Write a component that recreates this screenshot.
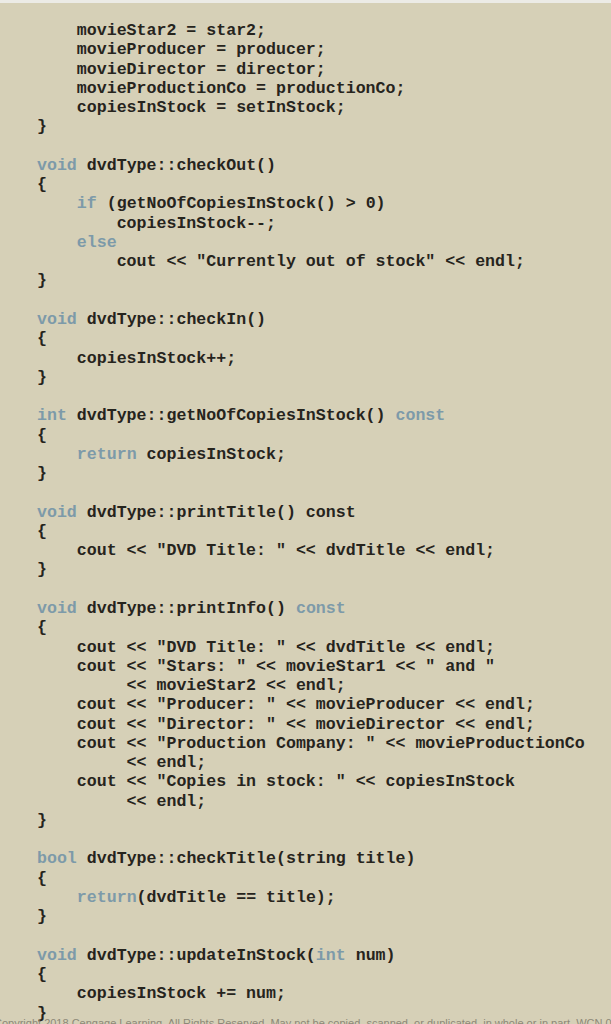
import React from 'react'

// keywords are wrapped in {{ }}
const CODE = `    movieStar2 = star2;
    movieProducer = producer;
    movieDirector = director;
    movieProductionCo = productionCo;
    copiesInStock = setInStock;
}

{{void}} dvdType::checkOut()
{
    {{if}} (getNoOfCopiesInStock() > 0)
        copiesInStock--;
    {{else}}
        cout << "Currently out of stock" << endl;
}

{{void}} dvdType::checkIn()
{
    copiesInStock++;
}

{{int}} dvdType::getNoOfCopiesInStock() {{const}}
{
    {{return}} copiesInStock;
}

{{void}} dvdType::printTitle() const
{
    cout << "DVD Title: " << dvdTitle << endl;
}

{{void}} dvdType::printInfo() {{const}}
{
    cout << "DVD Title: " << dvdTitle << endl;
    cout << "Stars: " << movieStar1 << " and "
         << movieStar2 << endl;
    cout << "Producer: " << movieProducer << endl;
    cout << "Director: " << movieDirector << endl;
    cout << "Production Company: " << movieProductionCo
         << endl;
    cout << "Copies in stock: " << copiesInStock
         << endl;
}

{{bool}} dvdType::checkTitle(string title)
{
    {{return}}(dvdTitle == title);
}

{{void}} dvdType::updateInStock({{int}} num)
{
    copiesInStock += num;
}`

const renderLine = (line: string) => {
    const parts = line.split(/(\{\{[a-z]+\}\})/)
    return parts.map((p, i) =>
        p.startsWith('{{') ? (
            <span key={i} className="text-[#7d9aa9]">
                {p.slice(2, -2)}
            </span>
        ) : (
            <span key={i}>{p}</span>
        ),
    )
}

const App = () => {
    const lines = CODE.split('\n')
    return (
        <div className="h-[1024px] w-[611px] overflow-hidden bg-[#d6d0b7]">
            <div className="h-[3px] bg-[#ecebe6]" />
            <div
                className="pl-[37px] pt-[18px] text-[16.6px] leading-[19.28px] font-bold text-[#26241d] whitespace-pre"
                style={{ fontFamily: '"Courier New", "Liberation Mono", monospace' }}
            >
                {lines.map((l, i) => (
                    <div key={i} className="h-[19.28px]">
                        {l.length ? renderLine(l) : ' '}
                    </div>
                ))}
            </div>
            <div
                className="-ml-[6px] -mt-[6px] whitespace-nowrap text-[11px] leading-[12px] text-[#8d8878]"
                style={{ fontFamily: '"Liberation Sans", Arial, sans-serif' }}
            >
                Copyright 2018 Cengage Learning. All Rights Reserved. May not be copied, scanned, or duplicated, in whole or in part. WCN 02-200-203
            </div>
        </div>
    )
}

export default App
